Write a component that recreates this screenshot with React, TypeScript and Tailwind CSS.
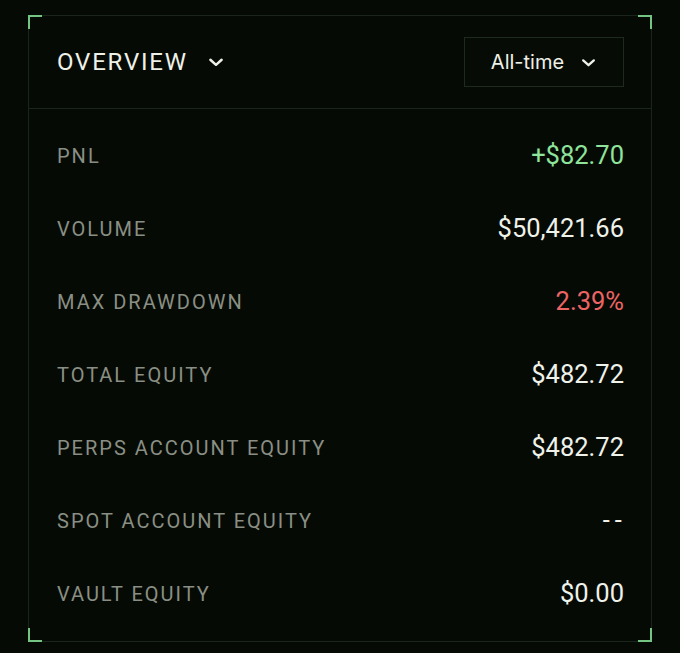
import React from "react";

const rows: { label: string; value: string; color: string }[] = [
  { label: "PNL", value: "+$82.70", color: "text-[#8ee49a]" },
  { label: "VOLUME", value: "$50,421.66", color: "text-[#eff2ea]" },
  { label: "MAX DRAWDOWN", value: "2.39%", color: "text-[#ec6464]" },
  { label: "TOTAL EQUITY", value: "$482.72", color: "text-[#eff2ea]" },
  { label: "PERPS ACCOUNT EQUITY", value: "$482.72", color: "text-[#eff2ea]" },
  { label: "SPOT ACCOUNT EQUITY", value: "--", color: "text-[#eff2ea] tracking-[0.2em] mr-[-3px]" },
  { label: "VAULT EQUITY", value: "$0.00", color: "text-[#eff2ea]" },
];

function Chevron({ className }: { className?: string }) {
  return (
    <svg className={className} viewBox="0 0 16 16" fill="none" stroke="currentColor" strokeWidth="2.2" strokeLinecap="round" strokeLinejoin="round">
      <path d="M3 6l5 4.5L13 6" />
    </svg>
  );
}

export default function App() {
  return (
    <div className="min-h-[653px] w-full bg-[#060a04] pt-[15px] px-[28px]" style={{ fontFamily: "Roboto, 'Liberation Sans', sans-serif" }}>
      <div className="relative w-[624px] border border-[#1a261b] bg-[#060a04]">
        <span className="absolute -left-[1px] -top-[1px] w-[14px] h-[14px] border-l-2 border-t-2 border-[#74c483]" />
        <span className="absolute -right-[1px] -top-[1px] w-[14px] h-[14px] border-r-2 border-t-2 border-[#74c483]" />
        <span className="absolute -left-[1px] -bottom-[1px] w-[14px] h-[14px] border-l-2 border-b-2 border-[#74c483]" />
        <span className="absolute -right-[1px] -bottom-[1px] w-[14px] h-[14px] border-r-2 border-b-2 border-[#74c483]" />

        <div className="flex h-[93px] items-center justify-between border-b border-[#1a261b] pl-[28px] pr-[27px]">
          <div className="flex items-center gap-[19px] text-[#eef1e8]">
            <span className="text-[24px] tracking-[0.075em] leading-none">OVERVIEW</span>
            <Chevron className="w-[18px] h-[18px]" />
          </div>
          <button className="flex h-[50px] w-[160px] items-center justify-center gap-[16px] border border-[#1e2a1e] bg-[#070b05] text-[#eef1e8]">
            <span className="text-[20px] leading-none" style={{ fontFamily: "Inter, Roboto, sans-serif" }}>All-time</span>
            <Chevron className="w-[17px] h-[17px]" />
          </button>
        </div>

        <div className="py-[10.5px] pl-[28px] pr-[27px]">
          {rows.map((r) => (
            <div key={r.label} className="flex h-[73px] items-center justify-between">
              <span className="text-[20px] tracking-[0.1em] text-[#8a8f85] leading-none">{r.label}</span>
              <span className={`text-[25.5px] leading-none -mt-[1px] ${r.color}`}>{r.value}</span>
            </div>
          ))}
        </div>
      </div>
    </div>
  );
}
